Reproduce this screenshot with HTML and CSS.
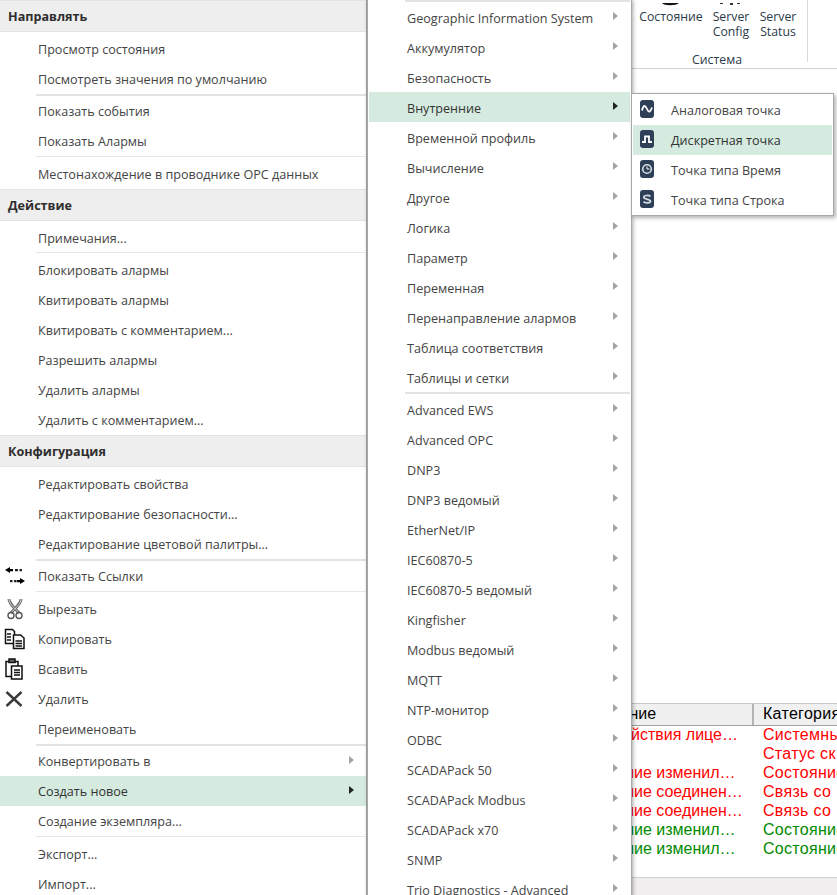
FILE: index.html
```html
<!DOCTYPE html>
<html lang="en">
  <head>
    <meta charset="UTF-8" />
    <meta name="viewport" content="width=device-width, initial-scale=1.0" />

    <link rel="stylesheet" href="styles.css">

    <title>Контекстное меню</title>
  </head>
  <body>
    <div class="app">
      <div class="ribbon">
        <div class="ribbon-group">
          <div class="ribbon-buttons">
            <div class="ribbon-btn btn-state">
              <svg class="ribbon-peek" width="24" height="3" viewBox="0 0 24 3"><path d="M3 0c2 3 14 3 17 0z" fill="#111" /></svg>
              <span>Состояние</span>
            </div>
            <div class="ribbon-btn btn-config">
              <svg class="ribbon-peek" width="24" height="3" viewBox="0 0 24 3"><path d="M1 0h3v1H1zM11 0h3v2h-3zM18 0h3v1h-3z" fill="#333" /></svg>
              <span>Server<br />Config</span>
            </div>
            <div class="ribbon-btn btn-status">
              <div class="ribbon-peek"></div>
              <span>Server<br />Status</span>
            </div>
          </div>
          <div class="ribbon-title">Система</div>
        </div>
      </div>

      <div class="grid-wrap">
        <div class="grid-head">
          <div class="col-name">Сообщение</div>
          <div class="col-cat">Категория</div>
        </div>
        <div class="grid-row red"><div class="col-name">Срок действия лице…</div><div class="col-cat">Системные</div></div>
        <div class="grid-row red"><div class="col-name"></div><div class="col-cat">Статус ск</div></div>
        <div class="grid-row red"><div class="col-name">Состояние изменил…</div><div class="col-cat">Состояние</div></div>
        <div class="grid-row red"><div class="col-name">Состояние соединен…</div><div class="col-cat">Связь со</div></div>
        <div class="grid-row red"><div class="col-name">Состояние соединен…</div><div class="col-cat">Связь со</div></div>
        <div class="grid-row green"><div class="col-name">Состояние изменил…</div><div class="col-cat">Состояние</div></div>
        <div class="grid-row green"><div class="col-name">Состояние изменил…</div><div class="col-cat">Состояние</div></div>
      </div>
      <div class="status-bar"></div>
    </div>

    <!-- main context menu -->
    <div class="menu menu-main">
      <div class="menu-head">Направлять</div>
      <div class="item">Просмотр состояния</div>
      <div class="item">Посмотреть значения по умолчанию</div>
      <div class="sep"></div>
      <div class="item">Показать события</div>
      <div class="item">Показать Алармы</div>
      <div class="sep-thin"></div>
      <div class="item">Местонахождение в проводнике ОРС данных</div>

      <div class="menu-head">Действие</div>
      <div class="item">Примечания...</div>
      <div class="sep-thin tight"></div>
      <div class="item">Блокировать алармы</div>
      <div class="item">Квитировать алармы</div>
      <div class="item">Квитировать с комментарием...</div>
      <div class="item">Разрешить алармы</div>
      <div class="item">Удалить алармы</div>
      <div class="item">Удалить с комментарием...</div>

      <div class="menu-head">Конфигурация</div>
      <div class="item">Редактировать свойства</div>
      <div class="item">Редактирование безопасности...</div>
      <div class="item">Редактирование цветовой палитры...</div>
      <div class="sep"></div>
      <div class="item">
        <span class="item-icon">
          <svg width="22" height="20" viewBox="0 0 22 20">
            <path d="M1 4 6 1v2h3v2.200H6V7z" fill="#000" />
            <path d="M11 3h3v2.200h-3zM15.500 3h2.500v2.200h-2.500z" fill="#222" />
            <path d="M21 15 16 12v2h-3v2.200h3V18z" fill="#000" />
            <path d="M6 14h2.500v2.200H6zM10 14h2.500v2.200H10z" fill="#222" />
          </svg>
        </span>
        Показать Ссылки
      </div>
      <div class="sep-thin"></div>
      <div class="item">
        <span class="item-icon icon-cut">
          <svg width="16" height="22" viewBox="0 0 16 22" fill="none">
            <path d="M2 1c0 5 6 9 10 14M14 1c0 5-6 9-10 14" stroke="#666" stroke-width="3" />
            <path d="M2 1c0 5 6 9 10 14M14 1c0 5-6 9-10 14" stroke="#ddd" stroke-width="1" />
            <circle cx="4" cy="17.500" r="3" stroke="#555" stroke-width="1.400" />
            <circle cx="12" cy="17.500" r="3" stroke="#555" stroke-width="1.400" />
          </svg>
        </span>
        Вырезать
      </div>
      <div class="item">
        <span class="item-icon">
          <svg width="22" height="22" viewBox="0 0 22 22" fill="#fff" stroke="#111" stroke-width="1.500">
            <path d="M1.500 1.500h7l2 2v12h-9z" />
            <path d="M9.500 7h7l3.500 3v10.500H9.500z" />
            <path d="M3 6h4M3 9h4M3 12h4M11.500 13h6.500M11.500 15.500h6.500M11.500 18h6.500" />
          </svg>
        </span>
        Копировать
      </div>
      <div class="item">
        <span class="item-icon">
          <svg width="20" height="22" viewBox="0 0 20 22" fill="#fff" stroke="#111" stroke-width="1.500">
            <path d="M2 3.500h12v15H2z" />
            <path d="M5 1h6v3.500H5z" fill="#666" />
            <path d="M7.500 8h10.500v13H7.500z" />
            <path d="M10 12h6M10 14.500h6M10 17h6" />
          </svg>
        </span>
        Всавить
      </div>
      <div class="item">
        <span class="item-icon icon-x">
          <svg width="18" height="18" viewBox="0 0 18 18"><path d="M1.500 2 16.500 16M16.500 2 1.500 16" stroke="#3a3a3a" stroke-width="2.400" fill="none" /></svg>
        </span>
        Удалить
      </div>
      <div class="item">Переименовать</div>
      <div class="sep"></div>
      <div class="item has-sub">Конвертировать в</div>
      <div class="item has-sub is-active">Создать новое</div>
      <div class="item">Создание экземпляра...</div>
      <div class="sep-thin"></div>
      <div class="item">Экспорт...</div>
      <div class="item">Импорт...</div>
    </div>

    <!-- "create new" submenu -->
    <div class="menu menu-new">
      <div class="sep"></div>
      <div class="item has-sub">Geographic Information System</div>
      <div class="item has-sub">Аккумулятор</div>
      <div class="item has-sub">Безопасность</div>
      <div class="item has-sub is-active">Внутренние</div>
      <div class="item has-sub">Временной профиль</div>
      <div class="item has-sub">Вычисление</div>
      <div class="item has-sub">Другое</div>
      <div class="item has-sub">Логика</div>
      <div class="item has-sub">Параметр</div>
      <div class="item has-sub">Переменная</div>
      <div class="item has-sub">Перенаправление алармов</div>
      <div class="item has-sub">Таблица соответствия</div>
      <div class="item has-sub">Таблицы и сетки</div>
      <div class="sep"></div>
      <div class="item has-sub">Advanced EWS</div>
      <div class="item has-sub">Advanced OPC</div>
      <div class="item has-sub">DNP3</div>
      <div class="item has-sub">DNP3 ведомый</div>
      <div class="item has-sub">EtherNet/IP</div>
      <div class="item has-sub">IEC60870-5</div>
      <div class="item has-sub">IEC60870-5 ведомый</div>
      <div class="item has-sub">Kingfisher</div>
      <div class="item has-sub">Modbus ведомый</div>
      <div class="item has-sub">MQTT</div>
      <div class="item has-sub">NTP-монитор</div>
      <div class="item has-sub">ODBC</div>
      <div class="item has-sub">SCADAPack 50</div>
      <div class="item has-sub">SCADAPack Modbus</div>
      <div class="item has-sub">SCADAPack x70</div>
      <div class="item has-sub">SNMP</div>
      <div class="item has-sub">Trio Diagnostics - Advanced</div>
    </div>

    <!-- "internal" points submenu -->
    <div class="menu menu-points">
      <div class="item">
        <span class="item-icon">
          <svg class="point-icon" width="14" height="18" viewBox="0 0 14 18"><rect width="14" height="18" rx="3" fill="#2d4057" /><path d="M2 10.500c1.500-6 3.200-5.500 5-1.500s3.200 3.500 5-1.500" stroke="#fff" stroke-width="1.800" fill="none" /></svg>
        </span>
        Аналоговая точка
      </div>
      <div class="item is-active">
        <span class="item-icon">
          <svg class="point-icon" width="14" height="18" viewBox="0 0 14 18"><rect width="14" height="18" rx="3" fill="#2d4057" /><path d="M2 12H5V6.500h4V12h3" stroke="#fff" stroke-width="1.800" fill="none" /></svg>
        </span>
        Дискретная точка
      </div>
      <div class="item">
        <span class="item-icon">
          <svg class="point-icon" width="14" height="18" viewBox="0 0 14 18"><rect width="14" height="18" rx="3" fill="#2d4057" /><circle cx="7" cy="9" r="4.300" stroke="#d8dde3" stroke-width="1.600" fill="none" /><path d="M7 6.500V9h2.500" stroke="#fff" stroke-width="1" fill="none" /></svg>
        </span>
        Точка типа Время
      </div>
      <div class="item">
        <span class="item-icon">
          <svg class="point-icon" width="14" height="18" viewBox="0 0 14 18"><rect width="14" height="18" rx="3" fill="#2d4057" /><path d="M10.500 6.500C9 5 3.800 5 3.800 7.300S10.500 9.200 10.500 11.200 5 13.300 3.500 11.700" stroke="#d8dde3" stroke-width="1.700" fill="none" /></svg>
        </span>
        Точка типа Строка
      </div>
    </div>
  </body>
</html>
```

FILE: styles.css
```css
html,
body {
  margin: 0;
  height: 100%;
  overflow: hidden;
}
body {
  position: relative;
  background: #fff;
  font-family: "Open Sans", sans-serif;
  font-size: 12.6px;
  color: #444;
}

/* window behind the menus */
.app {
  height: 895px;
  display: flex;
  flex-direction: column;
}
.ribbon {
  height: 68px;
  flex: none;
  padding-left: 632px;
  border-bottom: 1px solid #d2d2d2;
  color: #2b3a48;
  font-size: 12.3px;
}
.ribbon-group {
  width: 175px;
  height: 62px;
  border-right: 1px solid #d8d8d8;
  line-height: 15px;
  text-align: center;
}
.ribbon-buttons {
  display: flex;
  height: 52px;
}
.ribbon-btn {
  flex: none;
}
.ribbon-peek {
  display: block;
  height: 9px;
  margin: 0 auto;
}
.btn-state {
  width: 78px;
}
.btn-config {
  width: 42px;
}
.btn-status {
  width: 52px;
}
.ribbon-title {
  padding-right: 5px;
}

.grid-wrap {
  margin-top: 634px;
  flex: 1;
  font-family: "Liberation Sans", sans-serif;
  font-size: 16px;
  color: #000;
  white-space: nowrap;
}
.grid-head {
  height: 21px;
  display: flex;
  line-height: 20px;
  background: #f0f0f0;
  border-top: 1px solid #c8c8c8;
  border-bottom: 1px solid #a0a0a0;
  margin-bottom: -1px;
}
.grid-row {
  height: 19px;
  line-height: 19px;
  display: flex;
}
.col-name {
  width: 754px;
  padding-left: 572px;
  box-sizing: border-box;
  flex: none;
}
.grid-head .col-name {
  padding-left: 569px;
  border-right: 2px solid #b4b4b4;
}
.col-cat {
  padding-left: 9px;
  overflow: hidden;
  letter-spacing: 0.3px;
}
.red {
  color: #f00;
}
.green {
  color: #008a00;
}
.status-bar {
  height: 17px;
  flex: none;
  background: #f0eeee;
  border-top: 1px solid #cfcfcf;
}

/* popup menus */
.menu {
  position: absolute;
  top: 0;
  box-sizing: border-box;
  background: #fff;
  box-shadow: 1px 0 4px rgba(0, 0, 0, 0.35);
}
.menu-main {
  left: 0;
  width: 367px;
  height: 905px;
  border-right: 1px solid #a8a8a8;
}
.menu-new {
  left: 367px;
  width: 265px;
  height: 905px;
  padding: 0 1px;
  border-left: 1px solid #a8a8a8;
  border-right: 1px solid #a8a8a8;
}
.menu-new .item {
  padding-top: 2px;
  box-sizing: border-box;
}
.menu-points {
  left: 631px;
  top: 93px;
  width: 203px;
  padding: 1px 1px 0;
  border: 1px solid #a8a8a8;
  box-shadow: 2px 2px 4px rgba(0, 0, 0, 0.3);
}
.menu-head {
  height: 29px;
  padding: 1px 0 0 8px;
  line-height: 29px;
  font-weight: bold;
  color: #2e2e2e;
  background: #eee;
  border-top: 1px solid #e3e3e3;
  border-bottom: 1px solid #e3e3e3;
  margin-bottom: 2px;
}
.item {
  position: relative;
  display: flex;
  align-items: center;
  height: 30px;
  padding-left: 38px;
  white-space: nowrap;
}
.item-icon {
  flex: none;
  width: 38px;
  margin-left: -38px;
  padding-left: 4px;
  box-sizing: border-box;
  display: flex;
}
.icon-x {
  padding-left: 5px;
}
.icon-cut {
  padding-left: 7px;
}
.menu-points .item-icon {
  padding-left: 7px;
}
.point-icon {
  margin-top: -2px;
}
.is-active {
  background: #d5ebe0;
  color: #333;
}
.has-sub::after {
  content: "";
  position: absolute;
  right: 12px;
  top: 10px;
  border-left: 5px solid #a4a4a4;
  border-top: 4.5px solid transparent;
  border-bottom: 4.5px solid transparent;
}
.has-sub.is-active::after {
  border-left-color: #222;
}
.sep {
  height: 2px;
  margin-left: 36px;
  background: #e3e3e3;
}
.sep-thin {
  height: 1px;
  margin: 0 0 2px 36px;
  background: #e6e6e6;
}
.sep-thin.tight {
  margin-top: -1px;
}
```
